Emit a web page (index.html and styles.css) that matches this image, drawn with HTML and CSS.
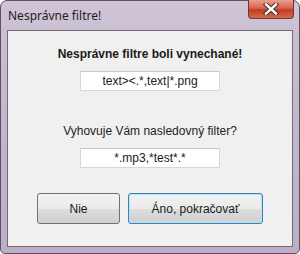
FILE: index.html
```html
<!DOCTYPE html>
<html lang="sk">
<head>
  <meta charset="UTF-8">
  <title>Nesprávne filtre!</title>
  <link rel="stylesheet" href="styles.css">
</head>
<body>

  <div class="window">
    <div class="titlebar">
      <span class="title">Nesprávne filtre!</span>
      <div class="close-btn">
        <svg width="16" height="12" viewBox="0 0 16 12">
          <path d="M3 1.5 L13 10.5 M13 1.5 L3 10.5" stroke="#3b2f30" stroke-width="4.4" stroke-linecap="square"/>
          <path d="M3 1.5 L13 10.5 M13 1.5 L3 10.5" stroke="#ffffff" stroke-width="2.4" stroke-linecap="square"/>
        </svg>
      </div>
    </div>

    <div class="client">
      <p class="heading">Nesprávne filtre boli vynechané!</p>
      <div class="field">text&gt;&lt;.*,text|*.png</div>
      <p class="label">Vyhovuje Vám nasledovný filter?</p>
      <div class="field">*.mp3,*test*.*</div>

      <div class="buttons">
        <button class="btn btn-no">Nie</button>
        <button class="btn btn-yes">Áno, pokračovať</button>
      </div>
    </div>
  </div>

</body>
</html>
```

FILE: styles.css
```css
body {
  margin: 0;
  font-family: "Liberation Sans", Arial, sans-serif;
  background-color: #ffffff;
}

.window {
  width: 300px;
  height: 254px;
  box-sizing: border-box;
  border: 1px solid #5b5163;
  border-radius: 7px 7px 5px 5px;
  padding: 0 6px 6px 6px;
  background: linear-gradient(to bottom, #cfc5d6 0%, #c6bacf 30%, #bcaec6 100%);
  display: flex;
  flex-direction: column;
}

.titlebar {
  height: 29px;
  display: flex;
  justify-content: space-between;
  align-items: flex-start;
}

.title {
  margin-top: 6px;
  margin-left: 1px;
  font-family: "Noto Sans", "Open Sans", sans-serif;
  font-size: 12px;
  color: #1e1e1e;
}

.close-btn {
  width: 46px;
  height: 19px;
  margin-top: -1px;
  margin-right: -1px;
  box-sizing: border-box;
  border: 1px solid #6a3a35;
  border-top: none;
  border-radius: 0 0 4px 4px;
  background: linear-gradient(to bottom, #e9a08f 0%, #d8644c 45%, #c23b22 55%, #d66a4d 100%);
  display: flex;
  justify-content: center;
  align-items: center;
}

.client {
  flex: 1;
  background-color: #f0f0f0;
  border: 1px solid #6e6e6e;
  display: flex;
  flex-direction: column;
  align-items: center;
}

.heading {
  margin: 15px 0 0 0;
  font-size: 12px;
  font-weight: bold;
  color: #1a1a1a;
  line-height: 16px;
}

.field {
  margin-top: 9px;
  width: 140px;
  height: 20px;
  box-sizing: border-box;
  background-color: #ffffff;
  border: 1px solid #d7d7d7;
  border-top-color: #c8c8c8;
  text-align: center;
  font-size: 12px;
  line-height: 18px;
  color: #1a1a1a;
}

.label {
  margin: 32px 0 0 0;
  font-size: 12px;
  line-height: 16px;
  color: #1e1e1e;
}

.label + .field {
  margin-top: 9px;
}

.buttons {
  margin-top: 25px;
  display: flex;
  gap: 8px;
}

.btn {
  height: 31px;
  box-sizing: border-box;
  border: 1px solid #707070;
  border-radius: 3px;
  background: linear-gradient(to bottom, #f2f2f2 0%, #ebebeb 50%, #dddddd 51%, #cfcfcf 100%);
  font-family: "Liberation Sans", Arial, sans-serif;
  font-size: 12px;
  color: #1a1a1a;
  padding: 0;
}

.btn-no {
  width: 83px;
}

.btn-yes {
  width: 135px;
  border-color: #3c7fb1;
  box-shadow: inset 0 0 0 1px #b6e4f7;
}
```
